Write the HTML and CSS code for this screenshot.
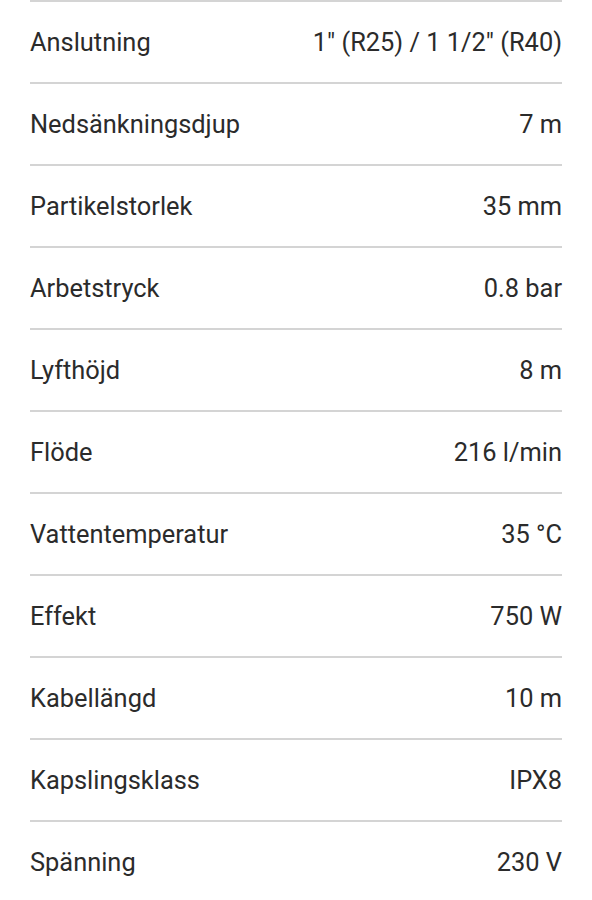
FILE: index.html
```html
<!DOCTYPE html>
<html lang="sv">
<head>
  <meta charset="UTF-8">
  <title>Specifikationer</title>
  <link rel="stylesheet" href="styles.css">
</head>
<body>

  <div class="specs">
    <div class="row"><span class="label">Anslutning</span><span class="value">1" (R25) / 1 1/2" (R40)</span></div>
    <div class="row"><span class="label">Nedsänkningsdjup</span><span class="value">7 m</span></div>
    <div class="row"><span class="label">Partikelstorlek</span><span class="value">35 mm</span></div>
    <div class="row"><span class="label">Arbetstryck</span><span class="value">0.8 bar</span></div>
    <div class="row"><span class="label">Lyfthöjd</span><span class="value">8 m</span></div>
    <div class="row"><span class="label">Flöde</span><span class="value">216 l/min</span></div>
    <div class="row"><span class="label">Vattentemperatur</span><span class="value">35 °C</span></div>
    <div class="row"><span class="label">Effekt</span><span class="value">750 W</span></div>
    <div class="row"><span class="label">Kabellängd</span><span class="value">10 m</span></div>
    <div class="row"><span class="label">Kapslingsklass</span><span class="value">IPX8</span></div>
    <div class="row"><span class="label">Spänning</span><span class="value">230 V</span></div>
  </div>

</body>
</html>
```

FILE: styles.css
```css
body {
  font-family: Roboto, 'Noto Sans', sans-serif;
  background: #fff;
  color: #2b2b2b;
  margin: 0;
}

.specs {
  padding: 0 30px;
}

.row {
  display: flex;
  justify-content: space-between;
  align-items: center;
  height: 80px;
  border-top: 2px solid #d4d4d4;
  font-size: 25.4px;
}

.value {
  text-align: right;
}
```
